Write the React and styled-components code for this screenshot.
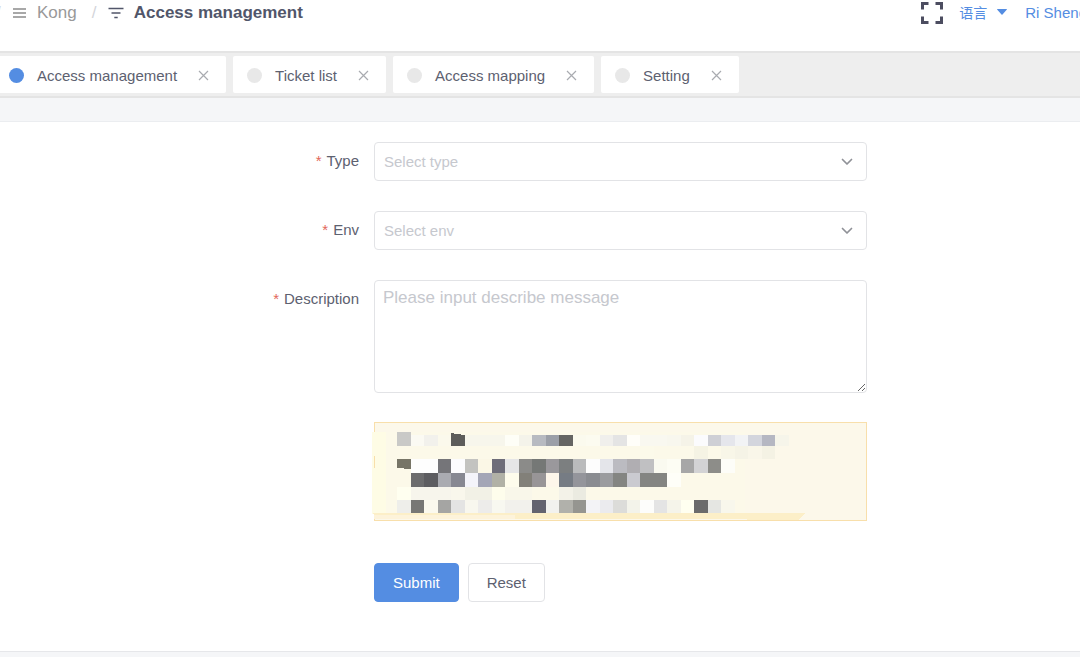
import { useState } from 'react'
import styled, { createGlobalStyle } from 'styled-components'

const colors = {
    primary: '#548de2',
    text: '#5d6170',
    title: '#51566a',
    muted: '#999999',
    placeholder: '#c6c8ce',
    border: '#e2e3e6',
    danger: '#e2685a',
    page: '#f5f6f8',
}

const GlobalStyle = createGlobalStyle`
    * {
        box-sizing: border-box;
    }
    body {
        margin: 0;
        background-color: ${colors.page};
        color: ${colors.text};
        font-family: "Liberation Sans", Arial, "Noto Sans CJK SC", sans-serif;
        font-size: 15px;
        overflow-x: hidden;
    }
    button, select, textarea {
        font-family: inherit;
        font-size: inherit;
        color: inherit;
    }
`

const Header = styled.header`
    display: flex;
    justify-content: space-between;
    height: 51px;
    overflow: hidden;
    background-color: #ffffff;
    line-height: 24px;
    white-space: nowrap;
`

const Breadcrumb = styled.nav`
    display: flex;
    height: 26px;
    align-items: center;
    margin-left: -4px;
    font-size: 17px;
`

const Separator = styled.span`
    width: 5px;
    color: #d3d5da;
`

const Crumb = styled.a`
    display: flex;
    align-items: center;
    gap: 10px;
    margin: 0 15px 0 11px;
    color: ${colors.muted};
    text-decoration: none;
`

const CurrentCrumb = styled.span`
    display: flex;
    align-items: center;
    gap: 10px;
    margin-left: 11px;
    color: ${colors.title};
    font-weight: bold;
`

const HeaderTools = styled.div`
    display: flex;
    height: 26px;
    align-items: center;
    margin-right: -7px;
`

const IconButton = styled.button`
    display: flex;
    padding: 0;
    border: 0;
    background: none;
    color: ${({ $color }) => $color};
    cursor: pointer;
`

const LanguageButton = styled.button`
    display: flex;
    align-items: center;
    gap: 10px;
    margin: 0 18px 0 16px;
    padding: 0 0 3px;
    border: 0;
    background: none;
    color: ${colors.primary};
    font-size: 14px;
    cursor: pointer;
`

const UserLink = styled.a`
    color: ${colors.primary};
    text-decoration: none;
`

const TabBar = styled.nav`
    display: flex;
    gap: 7px;
    height: 47px;
    padding: 3px 0;
    border-top: 2px solid #e4e4e4;
    border-bottom: 2px solid #e4e4e4;
    background-color: #eeeeee;
    overflow: hidden;
`

const Tab = styled.div`
    display: flex;
    align-items: center;
    flex: none;
    height: 37px;
    padding: 2px 17px 0 14px;
    border-radius: 2px;
    background-color: #ffffff;
    &:first-child {
        margin-left: -5px;
    }
`

const TabLink = styled.a`
    display: flex;
    align-items: center;
    gap: 13px;
    margin-right: 21px;
    color: ${colors.text};
    text-decoration: none;
`

const TabDot = styled.span`
    width: 15px;
    height: 15px;
    border-radius: 50%;
    background-color: ${({ $active }) => ($active ? colors.primary : '#e8e8e8')};
`

const Card = styled.main`
    margin-top: 23px;
    padding: 20px 0 49px;
    border-top: 1px solid #ebedf0;
    border-bottom: 1px solid #e6e7ea;
    background-color: #ffffff;
`

const FormRow = styled.div`
    display: grid;
    grid-template-columns: 374fr 493fr 213fr;
    margin-bottom: 30px;
    &:last-child {
        margin-bottom: 0;
        padding-top: 12px;
    }
`

const Label = styled.label`
    padding-right: 15px;
    line-height: 37px;
    text-align: right;
    &::before {
        content: '*';
        margin-right: 5px;
        color: ${colors.danger};
    }
`

const Field = styled.div`
    grid-column: 2;
    min-width: 0;
`

const SelectWrapper = styled.div`
    position: relative;
    & > svg {
        position: absolute;
        top: 16px;
        right: 14px;
        pointer-events: none;
    }
`

const Select = styled.select`
    display: block;
    width: 100%;
    height: 39px;
    padding: 0 36px 0 9px;
    border: 1px solid ${colors.border};
    border-radius: 4px;
    background-color: #ffffff;
    color: ${({ value }) => (value ? colors.text : colors.placeholder)};
    appearance: none;
`

const TextArea = styled.textarea`
    display: block;
    width: 100%;
    height: 113px;
    padding: 7px 8px;
    border: 1px solid ${colors.border};
    border-radius: 4px;
    font-size: 17px;
    line-height: 20px;
    resize: vertical;
    &::placeholder {
        color: ${colors.placeholder};
    }
`

const Notice = styled.div`
    height: 99px;
    margin-top: -1px;
    border: 1px solid #f8dfab;
    background-color: #fcf8ea;
    & > svg {
        display: block;
        overflow: visible;
    }
`

const Actions = styled.div`
    grid-column: 2;
    display: flex;
    gap: 9px;
`

const Button = styled.button`
    height: 39px;
    padding: 0 18px;
    border: 1px solid ${({ $primary }) => ($primary ? colors.primary : colors.border)};
    border-radius: 4px;
    background-color: ${({ $primary }) => ($primary ? colors.primary : '#ffffff')};
    color: ${({ $primary }) => ($primary ? '#ffffff' : colors.text)};
    cursor: pointer;
`

const tabs = ['Access management', 'Ticket list', 'Access mapping', 'Setting']

// Each row: top, height and the cell colours by column index
const mosaicRows = [
    { y: 12, height: 11, cells: {
        0: '#c9c9c7', 1: '#fbfaf3', 2: '#f2f1ec', 3: '#fbf9ec', 4: '#5d5d5b', 5: '#f7f6ec', 6: '#f7f6ec', 7: '#f7f6ec',
        8: '#fefef7', 9: '#f4f3ea', 10: '#b7bac1', 11: '#9b9fa8', 12: '#656563', 13: '#fbfaee', 14: '#fcfbf0',
        15: '#f0efec', 16: '#e4e4e4', 17: '#fffef9', 18: '#f9f8f0', 19: '#f9f8f0', 20: '#f8f7ee', 21: '#f5f3e8',
        22: '#fbfbfd', 23: '#cecfd5', 24: '#e5e6ec', 25: '#f2f3f5', 26: '#d3d5dd', 27: '#b5b7c2', 28: '#f6f5ea',
    } },
    { y: 23, height: 13, cells: { 18: '#fcfaea', 22: '#f5f3e4', 24: '#f8f6e8', 25: '#f5f3e6', 26: '#f9f6e9', 27: '#f4f2e4' } },
    { y: 36, height: 14, cells: {
        1: '#fefefe', 2: '#fefefe', 3: '#757579', 4: '#fcfcfe', 5: '#c3c3c0', 6: '#fbf7e6', 7: '#6e6d79', 8: '#e6e6e7',
        9: '#8b8b89', 10: '#757876', 11: '#9a989c', 12: '#7c7f80', 13: '#babbbc', 14: '#fdfdfd', 15: '#e4e5ea',
        16: '#bbbbc1', 17: '#b0aeb2', 18: '#c0c0c2', 19: '#fafaf0', 20: '#fdfdf4', 21: '#a7a7a7', 22: '#d3d3d5',
        23: '#8d8d89', 24: '#fdfdf8',
    } },
    { y: 50, height: 14, cells: {
        1: '#6c6c6e', 2: '#5d5d61', 3: '#aaabb1', 4: '#878892', 5: '#f4f4fa', 6: '#a4a6b6', 7: '#b1b1a6', 8: '#fefcec',
        9: '#828079', 10: '#989597', 11: '#fdf6ea', 12: '#767c84', 13: '#94959b', 14: '#8a8c91', 15: '#9b9c9f',
        16: '#848582', 17: '#cacad0', 18: '#848582', 19: '#848582', 20: '#fefef8',
    } },
    { y: 64, height: 13, cells: {
        0: '#fffff0', 1: '#f7f5ec', 2: '#f7f5ec', 3: '#f7f5ec', 4: '#f9f7ec', 5: '#f2f1e6', 6: '#f2f1e6', 7: '#fefdec',
        8: '#f9f7ea', 9: '#f9f7ea', 12: '#f3f2e8', 13: '#ebebe1',
    } },
    { y: 77, height: 13, cells: {
        0: '#eeeeea', 1: '#777775', 2: '#fbf9ee', 3: '#a5a5a3', 4: '#e4e4e3', 5: '#f8f7ee', 6: '#edecea', 7: '#f8f8f0',
        8: '#f2f1ec', 9: '#f2f1ec', 10: '#63636f', 11: '#f2f2ee', 12: '#b1b1ab', 13: '#959590', 14: '#f3f3f6',
        15: '#ebebee', 16: '#dcdcd9', 17: '#f3f3ea', 18: '#fdfdfb', 19: '#e4e4e4', 20: '#f5f4ea', 21: '#fffff0',
        22: '#6b6b6b', 23: '#e5e6e2', 24: '#f8f7ec',
    } },
]

const columnX = (index) => Math.round(22 + index * 13.5)

function Mosaic() {
    return (
        <svg width="440" height="97" viewBox="0 0 440 97" shapeRendering="crispEdges" aria-hidden="true">
            <rect x="-2" y="9" width="372" height="81" fill="#fcf9e9" />
            <rect x="-3" y="9" width="14" height="82" fill="#fefce5" />
            <path d="M-1 33h1v12h-1z" fill="#f8dfab" />
            <path d="M-4 90H430l-6 7H378l-12-1H-1v-5z" fill="#fcefc8" />
            <path d="M-1 92H140v4H-1z" fill="#fdf3da" />
            {mosaicRows.map((row) =>
                Object.entries(row.cells).map(([index, fill]) => (
                    <rect
                        key={`${row.y}-${index}`}
                        x={columnX(Number(index))}
                        y={row.y}
                        width={columnX(Number(index) + 1) - columnX(Number(index))}
                        height={row.height}
                        fill={fill}
                    />
                ))
            )}
            <path d="M22 9h14v3H22z" fill="#c9c9c7" />
            <path d="M76 10l13 2H76z" fill="#5d5d5b" />
            <path d="M22 36h14v10l-14-1z" fill="#777567" />
        </svg>
    )
}

function Chevron() {
    return (
        <svg width="12" height="8" viewBox="0 0 12 8" fill="none" stroke="#8f9197" strokeWidth="1.7" strokeLinecap="round" strokeLinejoin="round">
            <path d="M1.5 1.5L6 6l4.5-4.5" />
        </svg>
    )
}

function App() {
    const [type, setType] = useState('')
    const [env, setEnv] = useState('')
    const [description, setDescription] = useState('')

    const reset = () => {
        setType('')
        setEnv('')
        setDescription('')
    }

    return (
        <>
            <GlobalStyle />
            <Header>
                <Breadcrumb aria-label="Breadcrumb">
                    <Separator>/</Separator>
                    <Crumb href="#kong">
                        <svg width="15" height="12" viewBox="0 0 15 12" stroke="#8c8c8c" strokeWidth="1.3">
                            <path d="M1 2h13M1 6h13M1 10h13" />
                        </svg>
                        Kong
                    </Crumb>
                    <Separator>/</Separator>
                    <CurrentCrumb>
                        <svg width="16" height="12" viewBox="0 0 16 12" stroke="#51566a" strokeWidth="1.7">
                            <path d="M0.5 1.5h15M3.5 6h9M6.3 10.5h3.4" />
                        </svg>
                        Access management
                    </CurrentCrumb>
                </Breadcrumb>
                <HeaderTools>
                    <IconButton type="button" aria-label="Full screen" $color="#4c4d60">
                        <svg width="22" height="22" viewBox="0 0 22 22" fill="none" stroke="currentColor" strokeWidth="3">
                            <path d="M1.5 7.5v-6h6M14.5 1.5h6v6M20.5 14.5v6h-6M7.5 20.5h-6v-6" />
                        </svg>
                    </IconButton>
                    <LanguageButton type="button">
                        语言
                        <svg width="10" height="6" viewBox="0 0 10 6" fill="currentColor">
                            <path d="M0.3 0h9.4q.5.3 0 .8L5.5 5.5q-.5.5-1 0L.3.8q-.5-.5 0-.8z" />
                        </svg>
                    </LanguageButton>
                    <UserLink href="#user">Ri Sheng</UserLink>
                </HeaderTools>
            </Header>
            <TabBar aria-label="Open pages">
                {tabs.map((tab, index) => (
                    <Tab key={tab}>
                        <TabLink href="#tab">
                            <TabDot $active={index === 0} />
                            {tab}
                        </TabLink>
                        <IconButton type="button" aria-label={`Close ${tab}`} $color="#a9abb0">
                            <svg width="11" height="11" viewBox="0 0 11 11" stroke="currentColor" strokeWidth="1.2">
                                <path d="M1 1l9 9M10 1l-9 9" />
                            </svg>
                        </IconButton>
                    </Tab>
                ))}
            </TabBar>
            <Card>
                <form onSubmit={(e) => e.preventDefault()}>
                    <FormRow>
                        <Label htmlFor="type">Type</Label>
                        <Field>
                            <SelectWrapper>
                                <Select id="type" value={type} onChange={(e) => setType(e.target.value)}>
                                    <option value="">Select type</option>
                                </Select>
                                <Chevron />
                            </SelectWrapper>
                        </Field>
                    </FormRow>
                    <FormRow>
                        <Label htmlFor="env">Env</Label>
                        <Field>
                            <SelectWrapper>
                                <Select id="env" value={env} onChange={(e) => setEnv(e.target.value)}>
                                    <option value="">Select env</option>
                                </Select>
                                <Chevron />
                            </SelectWrapper>
                        </Field>
                    </FormRow>
                    <FormRow>
                        <Label htmlFor="description">Description</Label>
                        <Field>
                            <TextArea
                                id="description"
                                placeholder="Please input describe message"
                                value={description}
                                onChange={(e) => setDescription(e.target.value)}
                            />
                        </Field>
                    </FormRow>
                    <FormRow>
                        <Field>
                            <Notice>
                                <Mosaic />
                            </Notice>
                        </Field>
                    </FormRow>
                    <FormRow>
                        <Actions>
                            <Button type="submit" $primary>Submit</Button>
                            <Button type="button" onClick={reset}>Reset</Button>
                        </Actions>
                    </FormRow>
                </form>
            </Card>
        </>
    )
}

export default App
